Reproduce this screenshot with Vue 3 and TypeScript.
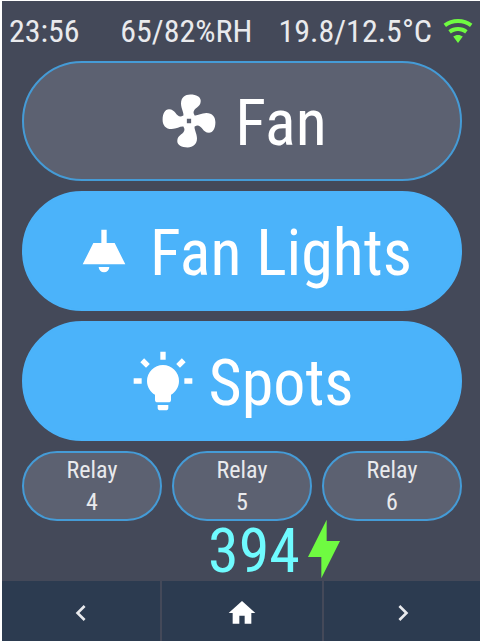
<script setup lang="ts">
import { ref } from 'vue'

interface Toggle {
  id: string
  label: string
  on: boolean
  icon: string
}

interface Relay {
  id: number
  on: boolean
}

interface NavItem {
  label: string
  icon: string
}

const icons = {
  fan: 'M9.9,9.9C10.1,8.8 9.1,7.5 9,5.5C9,3.2 10.5,2.1 12.5,2.1C14.8,2.1 16.4,3 16.4,4.5C16.4,7 13.6,7 13.7,9L14.1,9.9C15.2,10.1 16.5,9.1 18.5,9C20.8,9 21.9,10.5 21.9,12.5C21.9,14.8 21,16.4 19.5,16.4C17,16.4 17,13.6 15,13.7L14.1,14.1C13.9,15.2 14.9,16.5 15,18.5C15,20.8 13.5,21.9 11.5,21.9C9.2,21.9 7.6,21 7.6,19.5C7.6,17 10.4,17 10.3,15L9.9,14.1C8.8,13.9 7.5,14.9 5.5,15C3.2,15 2.1,13.5 2.1,11.5C2.1,9.2 3,7.6 4.5,7.6C7,7.6 7,10.4 9,10.3ZM11.2,11.2V12.8H12.8V11.2Z',
  ceilingLight: 'M8,9H11V4H13V9H16L20,17H4L8,9M14,18A2,2 0 0,1 12,20A2,2 0 0,1 10,18H14Z',
  bulb: 'M12,6A6,6 0 0,1 18,12C18,14.22 16.79,16.16 15,17.2V19A1,1 0 0,1 14,20H10A1,1 0 0,1 9,19V17.2C7.21,16.16 6,14.22 6,12A6,6 0 0,1 12,6M14,21V22A1,1 0 0,1 13,23H11A1,1 0 0,1 10,22V21H14M20,11H23V13H20V11M1,11H4V13H1V11M13,1V4H11V1H13M4.92,3.5L7.05,5.64L5.63,7.05L3.5,4.93L4.92,3.5M16.95,5.63L19.07,3.5L20.5,4.93L18.37,7.05L16.95,5.63Z',
  wifi: 'M12,21L15.6,16.2C14.6,15.45 13.35,15 12,15C10.65,15 9.4,15.45 8.4,16.2L12,21M12,3C7.95,3 4.21,4.34 1.2,6.6L3,9C5.5,7.12 8.62,6 12,6C15.38,6 18.5,7.12 21,9L22.8,6.6C19.79,4.34 16.05,3 12,3M12,9C9.3,9 6.81,9.89 4.8,11.4L6.6,13.8C8.1,12.67 9.97,12 12,12C14.03,12 15.9,12.67 17.4,13.8L19.2,11.4C17.19,9.89 14.7,9 12,9Z',
  flash: 'M11,15H6L13,1V9H18L11,23V15Z',
  left: 'M15.41,16.58L10.83,12L15.41,7.41L14,6L8,12L14,18L15.41,16.58Z',
  home: 'M10,20V14H14V20H19V12H22L12,3L2,12H5V20H10Z',
  right: 'M8.59,16.58L13.17,12L8.59,7.41L10,6L16,12L10,18L8.59,16.58Z',
}

const toggles = ref<Toggle[]>([
  { id: 'fan', label: 'Fan', on: false, icon: icons.fan },
  { id: 'fan-lights', label: 'Fan Lights', on: true, icon: icons.ceilingLight },
  { id: 'spots', label: 'Spots', on: true, icon: icons.bulb },
])

const relays = ref<Relay[]>([
  { id: 4, on: false },
  { id: 5, on: false },
  { id: 6, on: false },
])

const nav: NavItem[] = [
  { label: 'Previous page', icon: icons.left },
  { label: 'Home', icon: icons.home },
  { label: 'Next page', icon: icons.right },
]
</script>

<template>
  <div class="frame">
    <main class="screen">
      <header class="status">
        <span>23:56</span>
        <span class="humidity">65/82%RH</span>
        <span class="temperature">19.8/12.5°C</span>
        <svg class="icon small wifi" viewBox="0 0 24 24" aria-hidden="true"><path :d="icons.wifi" /></svg>
      </header>

      <section class="controls">
        <button
          v-for="t in toggles"
          :key="t.id"
          type="button"
          class="pill large"
          :class="{ on: t.on }"
          :aria-pressed="t.on"
          @click="t.on = !t.on"
        >
          <svg class="icon big" viewBox="0 0 24 24" aria-hidden="true"><path :d="t.icon" /></svg>
          <span class="caption">{{ t.label }}</span>
        </button>

        <div class="relays">
          <button
            v-for="r in relays"
            :key="r.id"
            type="button"
            class="pill relay"
            :class="{ on: r.on }"
            :aria-pressed="r.on"
            @click="r.on = !r.on"
          >
            <span>Relay</span>
            <span>{{ r.id }}</span>
          </button>
        </div>
      </section>

      <div class="power">
        <span class="reading">394</span>
        <svg class="icon big flash" viewBox="0 0 24 24" aria-hidden="true"><path :d="icons.flash" /></svg>
      </div>

      <nav class="nav">
        <button v-for="n in nav" :key="n.label" type="button" :aria-label="n.label">
          <svg class="icon small" viewBox="0 0 24 24" aria-hidden="true"><path :d="n.icon" /></svg>
        </button>
      </nav>
    </main>
  </div>
</template>

<style>
body {
  background: #ffffff;
}
</style>

<style scoped>
.frame {
  overflow: hidden;
  padding: 1px 0 1px 2px;
}

.screen {
  display: flex;
  flex-direction: column;
  margin-right: -2px;
  background: #444959;
  color: #e9eaed;
  font-family: "Roboto Condensed", Roboto, sans-serif;
}

button {
  margin: 0;
  padding: 0;
  border: 0;
  color: inherit;
  font: inherit;
  cursor: pointer;
}

.icon {
  display: block;
  flex: none;
  fill: currentColor;
}

.small {
  width: 32px;
  height: 32px;
}

.big {
  width: 64px;
  height: 64px;
}

.status {
  display: flex;
  align-items: center;
  height: 60px;
  padding: 0 8px 0 7px;
  font-size: 32px;
  line-height: 40px;
  white-space: nowrap;
}

.humidity {
  margin-left: auto;
}

.temperature {
  margin-left: 26px;
}

.wifi {
  margin-left: 10px;
  color: #6ffb41;
}

.controls {
  display: flex;
  flex-direction: column;
  gap: 10px;
  padding: 0 20px;
}

.pill {
  display: flex;
  align-items: center;
  justify-content: center;
  border: 2px solid #459bd6;
  border-radius: 60px;
  background: #5c6171;
}

.pill.on {
  border-color: #4bb3fa;
  background: #4bb3fa;
}

.large {
  gap: 14px;
  height: 120px;
  color: #ffffff;
}

.caption {
  padding-top: 6px;
  font-size: 64px;
  line-height: 72px;
  white-space: nowrap;
}

.relays {
  display: grid;
  grid-template-columns: repeat(3, 1fr);
  gap: 10px;
}

.relay {
  flex-direction: column;
  height: 70px;
  font-size: 24px;
  line-height: 32px;
}

.power {
  display: flex;
  align-items: center;
  justify-content: center;
  height: 56px;
  padding: 0 0 4px 80px;
  color: #6ffbff;
}

.reading {
  padding-top: 4px;
  font-size: 62px;
  line-height: 56px;
}

.flash {
  margin-left: -8px;
  color: #6ffb41;
}

.nav {
  display: grid;
  grid-template-columns: 158fr 160fr 158fr;
  gap: 2px;
}

.nav button {
  display: flex;
  align-items: center;
  justify-content: center;
  height: 60px;
  padding-top: 4px;
  background: #2c3b50;
}

.nav button:nth-child(2) {
  color: #ffffff;
}
</style>
